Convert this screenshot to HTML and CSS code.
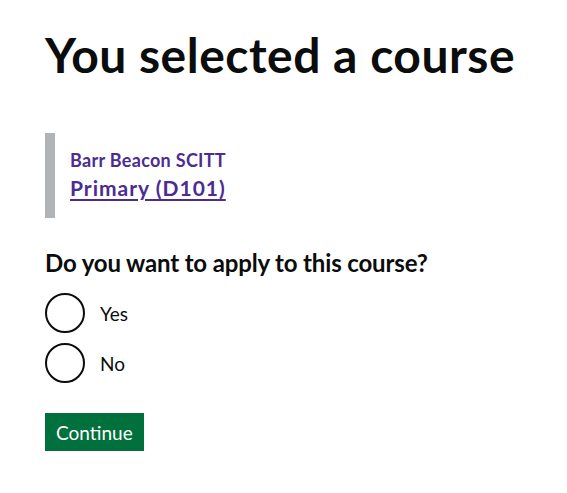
FILE: index.html
```html
<!DOCTYPE html>
<html lang="en">
<head>
<meta charset="utf-8">
<title>You selected a course</title>
<link rel="stylesheet" href="styles.css">
</head>
<body>
<main class="page">
  <h1 class="heading-xl">You selected a course</h1>
  <div class="inset">
    <span class="caption">Barr Beacon SCITT</span>
    <a class="course-link" href="#">Primary (D101)</a>
  </div>
  <form class="form">
    <fieldset class="fieldset">
      <legend class="legend">Do you want to apply to this course?</legend>
      <div class="radios">
        <label class="radio"><span class="radio-circle"></span><span class="radio-label">Yes</span></label>
        <label class="radio"><span class="radio-circle"></span><span class="radio-label">No</span></label>
      </div>
    </fieldset>
    <button class="button" type="button">Continue</button>
  </form>
</main>
</body>
</html>
```
FILE: styles.css
```css
html, body {
  margin: 0;
  padding: 0;
  background: #ffffff;
}
body {
  font-family: Lato, "Liberation Sans", Arial, sans-serif;
  color: #0b0c0c;
}
.page {
  padding: 30px 45px 0 45px;
}
.heading-xl {
  font-size: 48px;
  line-height: 50px;
  font-weight: 700;
  letter-spacing: 0.5px;
  margin: 0 0 53px 0;
}
.inset {
  border-left: 10px solid #b1b4b6;
  padding: 15px;
  display: flex;
  flex-direction: column;
  margin: 0 0 30px 0;
}
.caption {
  font-size: 18px;
  line-height: 24px;
  font-weight: 700;
  letter-spacing: 0.3px;
  color: #4c2c92;
}
.course-link {
  font-size: 21px;
  line-height: 31px;
  font-weight: 700;
  letter-spacing: 1px;
  color: #4c2c92;
  text-decoration: underline;
  text-underline-offset: 3px;
  text-decoration-thickness: 2px;
  align-self: flex-start;
}
.fieldset {
  border: 0;
  margin: 0;
  padding: 0;
}
.legend {
  font-size: 24px;
  line-height: 30px;
  font-weight: 700;
  letter-spacing: -0.15px;
  padding: 0;
  margin: 0 0 15px 0;
}
.radios {
  display: flex;
  flex-direction: column;
  gap: 10px;
}
.radio {
  display: flex;
  align-items: center;
  gap: 15px;
}
.radio-circle {
  width: 40px;
  height: 40px;
  box-sizing: border-box;
  border: 2px solid #0b0c0c;
  border-radius: 50%;
  flex: none;
}
.radio-label {
  font-size: 19px;
  line-height: 25px;
}
.button {
  margin-top: 30px;
  font-family: inherit;
  font-size: 19px;
  line-height: 23px;
  color: #ffffff;
  background: #00703c;
  border: 0;
  border-radius: 0;
  padding: 8px 11px 7px 11px;
  box-shadow: 0 2px 0 #002d18;
  cursor: pointer;
}
```
